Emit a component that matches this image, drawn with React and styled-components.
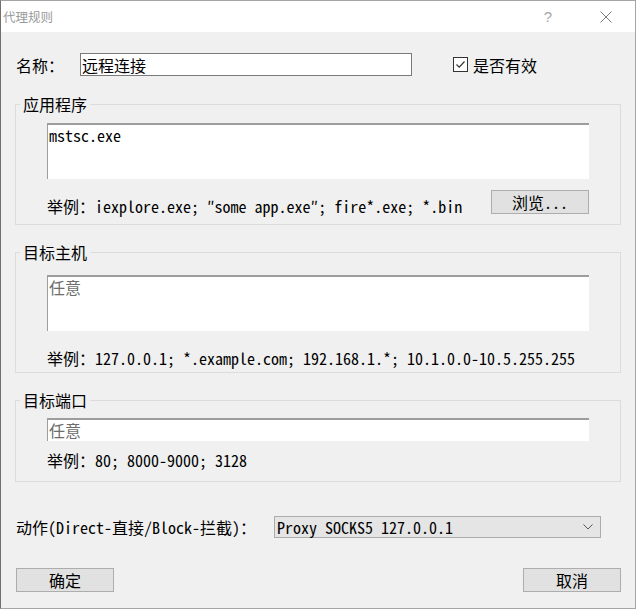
import styled, { createGlobalStyle } from "styled-components"

const MONO = `"Noto Sans Mono CJK SC", "Noto Sans CJK SC", "Liberation Mono", monospace`

const GlobalStyle = createGlobalStyle`
  html, body { margin: 0; padding: 0; background: #f0f0f0; }
  body { font-family: ${MONO}; }
`

const Window = styled.div`
  width: 636px;
  height: 609px;
  box-sizing: border-box;
  border: 1px solid #a5a5a5;
  border-left-color: #6f6f6f;
  background: #f0f0f0;
  display: flex;
  flex-direction: column;
  font-family: ${MONO};
  font-size: 16px;
  line-height: 16px;
  color: #000;
`
const TitleBar = styled.div`
  height: 31px;
  flex-shrink: 0;
  background: #fff;
  display: flex;
  align-items: center;
`
const Title = styled.div`
  flex: 1;
  padding-left: 2px;
  font-family: "Noto Sans CJK SC", sans-serif;
  font-size: 12.5px;
  color: #9a9a9a;
`
const Help = styled.span`
  font-family: "Liberation Sans", sans-serif;
  font-size: 15px;
  color: #a6a6a6;
  margin-right: 48px;
`
const Close = styled.span`
  display: flex;
  margin-right: 23px;
`
const Body = styled.div`
  flex: 1;
  display: flex;
  flex-direction: column;
  padding: 0 14px;
`
const NameRow = styled.div`
  margin-top: 21px;
  height: 23px;
  display: flex;
  align-items: center;
`
const Label = styled.span`
  width: ${p => p.$w || "auto"};
  padding-left: 1px;
  flex-shrink: 0;
`
const LineInput = styled.input`
  box-sizing: border-box;
  width: 332px;
  height: 23px;
  border: 1px solid #7a7a7a;
  padding: 0 1px;
  font: inherit;
  background: #fff;
  color: #000;
  outline: none;
`
const Check = styled.label`
  margin-left: 41px;
  display: flex;
  align-items: center;
  gap: 5px;
`
const Box = styled.span`
  width: 13px;
  height: 13px;
  border: 1px solid #333;
  background: #fff;
  display: flex;
  align-items: center;
  justify-content: center;
`
const Group = styled.fieldset`
  margin: ${p => p.$mt}px 0 0;
  padding: 0 4px;
  border: 1px solid #dcdcdc;
  min-width: 0;
`
const Legend = styled.legend`
  padding: 0 3px;
  line-height: 16px;
`
const Content = styled.div`
  padding: ${p => p.$pt}px 27px ${p => p.$pb}px;
  display: flex;
  flex-direction: column;
`
const TextBox = styled.textarea`
  box-sizing: border-box;
  width: 100%;
  height: ${p => p.$h}px;
  margin: 0;
  border: none;
  border-top: 2px solid #9d9d9d;
  border-left: 1px solid #9d9d9d;
  padding: 1px 0 0 1px;
  font: inherit;
  line-height: 18px;
  color: ${p => (p.$muted ? "#6d6d6d" : "#000")};
  background: #fff;
  resize: none;
  overflow: hidden;
  outline: none;
  display: block;
`
const HintRow = styled.div`
  margin-top: ${p => p.$mt}px;
  display: flex;
  align-items: flex-end;
  justify-content: space-between;
`
const Hint = styled.span`
  line-height: 16px;
  white-space: pre;
`
const Button = styled.button`
  box-sizing: border-box;
  width: 98px;
  height: 24px;
  margin: 0;
  padding: 0;
  background: #e1e1e1;
  border: 1px solid #adadad;
  font: inherit;
  color: #000;
`
const ActionRow = styled.div`
  margin-top: 34px;
  height: 22px;
  display: flex;
  align-items: center;
`
const Combo = styled.div`
  box-sizing: border-box;
  width: 327px;
  height: 22px;
  margin-left: auto;
  margin-right: 20px;
  padding: 0 7px 0 2px;
  background: #e5e5e5;
  border: 1px solid #acacac;
  display: flex;
  align-items: center;
  justify-content: space-between;
`
const Footer = styled.div`
  margin-top: 30px;
  padding-left: 1px;
  display: flex;
  justify-content: space-between;
`

export default function App() {
  return (
    <Window>
      <GlobalStyle />
      <TitleBar>
        <Title>代理规则</Title>
        <Help>?</Help>
        <Close>
          <svg width="12" height="12" viewBox="0 0 12 12">
            <path d="M0.5 0.5L11.5 11.5M11.5 0.5L0.5 11.5" stroke="#7d7d7d" strokeWidth="1" />
          </svg>
        </Close>
      </TitleBar>
      <Body>
        <NameRow>
          <Label $w="64px">名称：</Label>
          <LineInput defaultValue="远程连接" />
          <Check>
            <Box>
              <svg width="11" height="11" viewBox="0 0 11 11">
                <path d="M1.5 5.5L4.2 8.2L9.5 2.5" fill="none" stroke="#333" strokeWidth="1.2" />
              </svg>
            </Box>
            是否有效
          </Check>
        </NameRow>

        <Group $mt={20}>
          <Legend>应用程序</Legend>
          <Content $pt={11} $pb={10}>
            <TextBox $h={56} defaultValue="mstsc.exe" />
            <HintRow $mt={11}>
              <Hint>举例：iexplore.exe; ″some app.exe″; fire*.exe; *.bin</Hint>
              <Button>浏览...</Button>
            </HintRow>
          </Content>
        </Group>

        <Group $mt={19}>
          <Legend>目标主机</Legend>
          <Content $pt={15} $pb={6}>
            <TextBox $h={56} $muted defaultValue="任意" />
            <HintRow $mt={19}>
              <Hint>举例：127.0.0.1; *.example.com; 192.168.1.*; 10.1.0.0-10.5.255.255</Hint>
            </HintRow>
          </Content>
        </Group>

        <Group $mt={19}>
          <Legend>目标端口</Legend>
          <Content $pt={10} $pb={13}>
            <TextBox $h={23} $muted defaultValue="任意" />
            <HintRow $mt={11}>
              <Hint>举例：80; 8000-9000; 3128</Hint>
            </HintRow>
          </Content>
        </Group>

        <ActionRow>
          <Label>动作(Direct-直接/Block-拦截)：</Label>
          <Combo>
            <span>Proxy SOCKS5 127.0.0.1</span>
            <svg width="10" height="6" viewBox="0 0 10 6">
              <path d="M0.5 0.5L5 5L9.5 0.5" fill="none" stroke="#555" strokeWidth="1" />
            </svg>
          </Combo>
        </ActionRow>

        <Footer>
          <Button>确定</Button>
          <Button>取消</Button>
        </Footer>
      </Body>
    </Window>
  )
}
